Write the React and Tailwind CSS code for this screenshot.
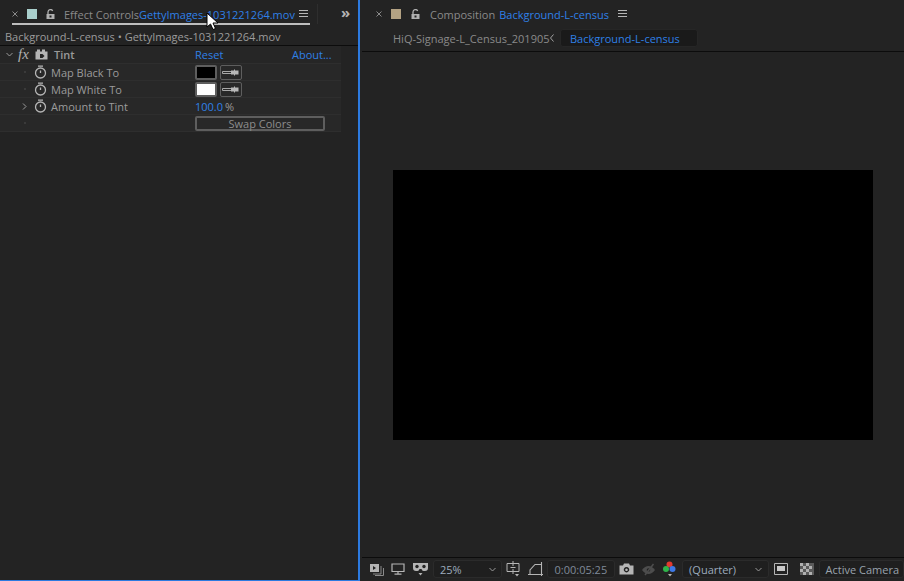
const F = { fontFamily: '"Open Sans", sans-serif' };

function Stopwatch() {
  return (
    <svg width="13" height="14" viewBox="0 0 13 14" fill="none" stroke="#b5b5b5" strokeWidth="1.3" className="shrink-0">
      <circle cx="6.5" cy="8" r="5" />
      <path d="M4 1.2h5M6.5 8V5.5" />
    </svg>
  );
}
function Chevron({ open, className = "" }) {
  return (
    <svg width="7" height="7" viewBox="0 0 7 7" fill="none" stroke="#9a9a9a" strokeWidth="1" className={className}>
      {open ? <path d="M0.5 2l3 3 3-3" /> : <path d="M2 0.5l3 3-3 3" />}
    </svg>
  );
}
function Lock() {
  return (
    <svg width="9" height="11" viewBox="0 0 9 11" className="shrink-0">
      <path d="M2 5V3a2.5 2.5 0 0 1 4.7-1.1" fill="none" stroke="#b0b0b0" strokeWidth="1.3" />
      <path d="M0.5 5h8v5h-8z M3.5 6.5v2h2v-2z" fill="#b0b0b0" fillRule="evenodd" />
    </svg>
  );
}
function Menu() {
  return (
    <svg width="9" height="8" viewBox="0 0 9 8" stroke="#b5b5b5" strokeWidth="1" className="shrink-0">
      <path d="M0 0.5h9M0 3.5h9M0 6.5h9" />
    </svg>
  );
}
function Close() {
  return (
    <svg width="6" height="6" viewBox="0 0 6 6" stroke="#8a8a8a" strokeWidth="1" className="shrink-0">
      <path d="M0.5 0.5l5 5M5.5 0.5l-5 5" />
    </svg>
  );
}
function Eyedrop() {
  return (
    <div className="w-[22px] h-[15px] border border-[#5e5e5e] rounded-[2px] flex items-center justify-center">
      <svg width="18" height="7" viewBox="0 0 18 7">
        <path d="M0.5 2.5h9v2h-9z" fill="none" stroke="#a8a8a8" strokeWidth="1" />
        <path d="M9 1.5h3V0.5h1v1h3.5v4H13v1h-1v-1H9z" fill="#b8b8b8" />
      </svg>
    </div>
  );
}
function Row({ children, left, label, bg = "" }) {
  return (
    <div className={`h-[17px] flex items-center border-t border-[#2e2e2e] ${bg}`}>
      <div className="w-[34px] flex justify-end pr-[5px] shrink-0">{left}</div>
      <div className="w-[161px] flex items-center gap-[4px] shrink-0 text-[#9b9b9b]">{label}</div>
      <div className="flex items-center gap-[3px]">{children}</div>
    </div>
  );
}
const Dot = () => <div className="w-[2px] h-[2px] bg-[#3a3a3a] mr-[3px]" />;

export default function App() {
  return (
    <div className="w-[904px] h-[581px] flex bg-[#232323] overflow-hidden relative text-[11px] leading-none text-[#9a9a9a]" style={F}>
      {/* Left panel */}
      <div className="w-[360px] shrink-0 h-full flex flex-col border-r-2 border-b border-[#2c7ae0] relative">
        <div className="h-[28px] flex items-center pl-[12px] shrink-0">
          <Close />
          <div className="w-[10px] h-[10px] bg-[#a9cfcc] ml-[9px]" />
          <div className="ml-[9px]"><Lock /></div>
          <span className="ml-[9px] w-[75px] text-[#8a8a8a] whitespace-nowrap">Effect Controls</span>
          <span className="w-[160px] text-[#2f80e7] whitespace-nowrap">GettyImages-1031221264.mov</span>
          <Menu />
          <div className="w-[1px] h-[20px] bg-[#2e2e2e] ml-[9px]" />
          <span className="ml-[23px] text-[#b5b5b5] text-[15px] font-bold leading-none -mt-[3px]">»</span>
        </div>
        <div className="h-[2px] w-[298px] bg-[#bdbdbd] ml-[12px] -mt-[5px] mb-[3px] shrink-0" />
        <div className="h-[14px] pl-[5px] mt-[1px] flex items-center text-[#9c9c9c] whitespace-nowrap shrink-0">
          Background-L-census • GettyImages-1031221264.mov
        </div>
        <div className="h-[1px] bg-[#0c0c0c] mt-[2px] shrink-0" />

        <div className="w-[341px] flex flex-col">
          <div className="h-[17px] flex items-center bg-[#262626]">
            <Chevron open className="ml-[6px]" />
            <span className="ml-[5px] w-[14px] text-[#b0b0b0] italic text-[15px] leading-none" style={{ fontFamily: '"Liberation Serif", serif' }}>fx</span>
            <svg width="13" height="11" viewBox="0 0 13 11" className="ml-[3px] shrink-0">
              <path d="M0.5 2.5h1.5v-2h3v2h2v-2h3v2h2.5v8h-12z M5 5v4h2.5l2-2-2-2z" fill="#b5b5b5" fillRule="evenodd" />
            </svg>
            <span className="ml-[6px] w-[141px] font-semibold text-[#9a9a9a]">Tint</span>
            <span className="w-[97px] text-[#2f80e7]">Reset</span>
            <span className="text-[#2f80e7]">About...</span>
          </div>
          <Row bg="bg-[#282828]" left={<Dot />} label={<><Stopwatch /><span>Map Black To</span></>}>
            <div className="w-[22px] h-[15px] border-2 border-[#5e5e5e] rounded-[2px] bg-black" />
            <Eyedrop />
          </Row>
          <Row bg="bg-[#282828]" left={<Dot />} label={<><Stopwatch /><span>Map White To</span></>}>
            <div className="w-[22px] h-[15px] border-2 border-[#5e5e5e] rounded-[2px] bg-white" />
            <Eyedrop />
          </Row>
          <Row bg="bg-[#282828]" left={<Chevron className="mr-[1px]" />} label={<><Stopwatch /><span>Amount to Tint</span></>}>
            <span className="text-[#2f80e7] -mr-[1px]">100.0</span>
            <span>%</span>
          </Row>
          <Row bg="bg-[#282828]" left={<Dot />} label={null}>
            <div className="w-[130px] h-[15px] border-2 border-[#5e5e5e] rounded-[2px] flex items-center justify-center text-[#8e8e8e]">Swap Colors</div>
          </Row>
          <div className="h-[1px] bg-[#2e2e2e]" />
        </div>
      </div>

      {/* Right panel */}
      <div className="flex-1 h-full ml-[2px] flex flex-col min-w-0">
        <div className="h-[28px] flex items-center pl-[14px] shrink-0">
          <Close />
          <div className="w-[10px] h-[10px] bg-[#b3a283] ml-[9px]" />
          <div className="ml-[10px]"><Lock /></div>
          <span className="ml-[10px] text-[#8a8a8a] whitespace-nowrap">Composition</span>
          <span className="ml-[4px] text-[#2f80e7] whitespace-nowrap">Background-L-census</span>
          <div className="ml-[9px]"><Menu /></div>
        </div>
        <div className="h-[20px] flex items-center pl-[31px] shrink-0">
          <span className="w-[156px] text-[#8a8a8a] whitespace-nowrap">HiQ-Signage-L_Census_201905</span>
          <svg width="6" height="8" viewBox="0 0 6 8" fill="none" stroke="#a0a0a0" strokeWidth="1">
            <path d="M4.5 0.5l-3 3.5 3 3.5" />
          </svg>
          <div className="ml-[5px] w-[138px] h-[18px] bg-[#1a1a1a] rounded-[3px] border border-[#262626] flex items-center pl-[9px] text-[#2f80e7] whitespace-nowrap">Background-L-census</div>
        </div>
        <div className="h-[1px] bg-[#0c0c0c] mt-[3px] shrink-0" />
        <div className="flex-1 flex items-start justify-center min-h-0 pt-[118px] pl-[0px]">
          <div className="w-[480px] h-[270px] bg-black ml-[0px]" />
        </div>
        <div className="h-[1px] bg-[#0c0c0c] shrink-0" />
        <div className="h-[23px] flex items-center pl-[7px] shrink-0 pb-[1px]">
          <svg width="15" height="13" viewBox="0 0 15 13" className="shrink-0">
            <path d="M1 1h9v8H1z" fill="#b5b5b5" />
            <path d="M4 3l3 2-3 2z" fill="#232323" />
            <path d="M12 3v8H4M14.5 5v7.5H6" fill="none" stroke="#8a8a8a" strokeWidth="1" />
          </svg>
          <svg width="14" height="12" viewBox="0 0 14 12" fill="none" stroke="#b5b5b5" strokeWidth="1.2" className="ml-[7px] shrink-0">
            <path d="M1 1h12v7.5H1zM7 8.5V11M3.5 11.2h7" />
          </svg>
          <svg width="17" height="14" viewBox="0 0 17 14" className="ml-[7px] shrink-0">
            <path d="M1 1h15v5q0 3-3 3h-1.5q-1.5 0-2-2h-2q-.5 2-2 2H4q-3 0-3-3z" fill="#b5b5b5" />
            <circle cx="5" cy="4.5" r="1.7" fill="#232323" />
            <circle cx="12" cy="4.5" r="1.7" fill="#232323" />
            <path d="M6.5 11h4l-2 2.5z" fill="#b5b5b5" />
          </svg>
          <div className="ml-[4px] w-[69px] h-[18px] border border-[#2b2b2b] bg-[#1f1f1f] rounded-[3px] flex items-center justify-between pl-[6px] pr-[5px] text-[#9dabbd]">
            <span>25%</span>
            <Chevron open />
          </div>
          <svg width="16" height="16" viewBox="0 0 16 16" fill="none" stroke="#b5b5b5" strokeWidth="1" className="ml-[4px] shrink-0">
            <path d="M1 2.5h12v8H1zM7 0v5M4.5 6.5h5M7 8v5" />
            <path d="M9 13h4l-2 2.5z" fill="#b5b5b5" stroke="none" />
          </svg>
          <svg width="15" height="14" viewBox="0 0 15 14" fill="none" stroke="#b5b5b5" strokeWidth="1.1" className="ml-[6px] shrink-0">
            <path d="M2 12.5V8L7 2.5h6.5V12.5zM13.5 0v14M0 12.5h15" />
          </svg>
          <div className="ml-[4px] w-[69px] h-[18px] border border-[#2b2b2b] bg-[#1f1f1f] rounded-[3px] flex items-center justify-center text-[#7f8a99]">0:00:05:25</div>
          <svg width="15" height="12" viewBox="0 0 15 12" className="ml-[4px] shrink-0">
            <path d="M0.5 2.5h3.5l1-2h5l1 2h3.5v9h-14z M7.5 4a2.7 2.7 0 1 0 .01 0z M7.5 5.5a1.3 1.3 0 1 1-.01 0z" fill="#b5b5b5" fillRule="evenodd" />
          </svg>
          <svg width="15" height="13" viewBox="0 0 15 13" className="ml-[7px] shrink-0">
            <path d="M1 7q3-4 6.500-4t6.500 4q-3 4-6.500 4T1 7z" fill="#4d4d4d" />
            <circle cx="7.500" cy="7" r="1.800" fill="#232323" />
            <path d="M12.500 1L4 12" stroke="#4d4d4d" strokeWidth="1.500" />
          </svg>
          <svg width="15" height="16" viewBox="0 0 15 16" className="ml-[6px] shrink-0">
            <circle cx="7.500" cy="3.500" r="3" fill="#e0392f" />
            <circle cx="4" cy="8" r="3" fill="#2fb44a" />
            <circle cx="10.500" cy="8" r="3" fill="#3d79e6" />
            <path d="M6 13h4l-2 2.500z" fill="#b5b5b5" />
          </svg>
          <div className="ml-[5px] w-[87px] h-[18px] border border-[#2b2b2b] bg-[#1f1f1f] rounded-[3px] flex items-center justify-between pl-[6px] pr-[6px] text-[#9dabbd] whitespace-nowrap">
            <span>(Quarter)</span>
            <Chevron open />
          </div>
          <svg width="14" height="12" viewBox="0 0 14 12" className="ml-[5px] shrink-0">
            <path d="M0.500 0.500h13v11h-13z" fill="none" stroke="#b5b5b5" />
            <path d="M3 3h8v5H3z" fill="#c8c8c8" />
          </svg>
          <svg width="14" height="12" viewBox="0 0 14 12" className="ml-[12px] shrink-0">
            <path d="M0 0h14v12H0z" fill="#5a5a5a" />
            <path d="M0 0h3v3H0zM6 0h3v3H6zM3 3h3v3H3zM9 3h3v3H9zM0 6h3v3H0zM6 6h3v3H6zM3 9h3v3H3zM9 9h3v3H9z" fill="#b0b0b0" />
          </svg>
          <div className="ml-[5px] w-[86px] h-[18px] border border-[#2b2b2b] bg-[#1f1f1f] rounded-[3px] flex items-center pl-[6px] text-[#9aa3ad] whitespace-nowrap">Active Camera</div>
        </div>
      </div>

      {/* Mouse cursor */}
      <svg width="14" height="19" viewBox="0 0 14 19" className="absolute left-[206px] top-[12px]">
        <path d="M1 1v14l3.500-3 2.500 5.500 2.500-1-2.500-5.500h5z" fill="#fff" stroke="#000" strokeWidth="1" />
      </svg>
    </div>
  );
}
